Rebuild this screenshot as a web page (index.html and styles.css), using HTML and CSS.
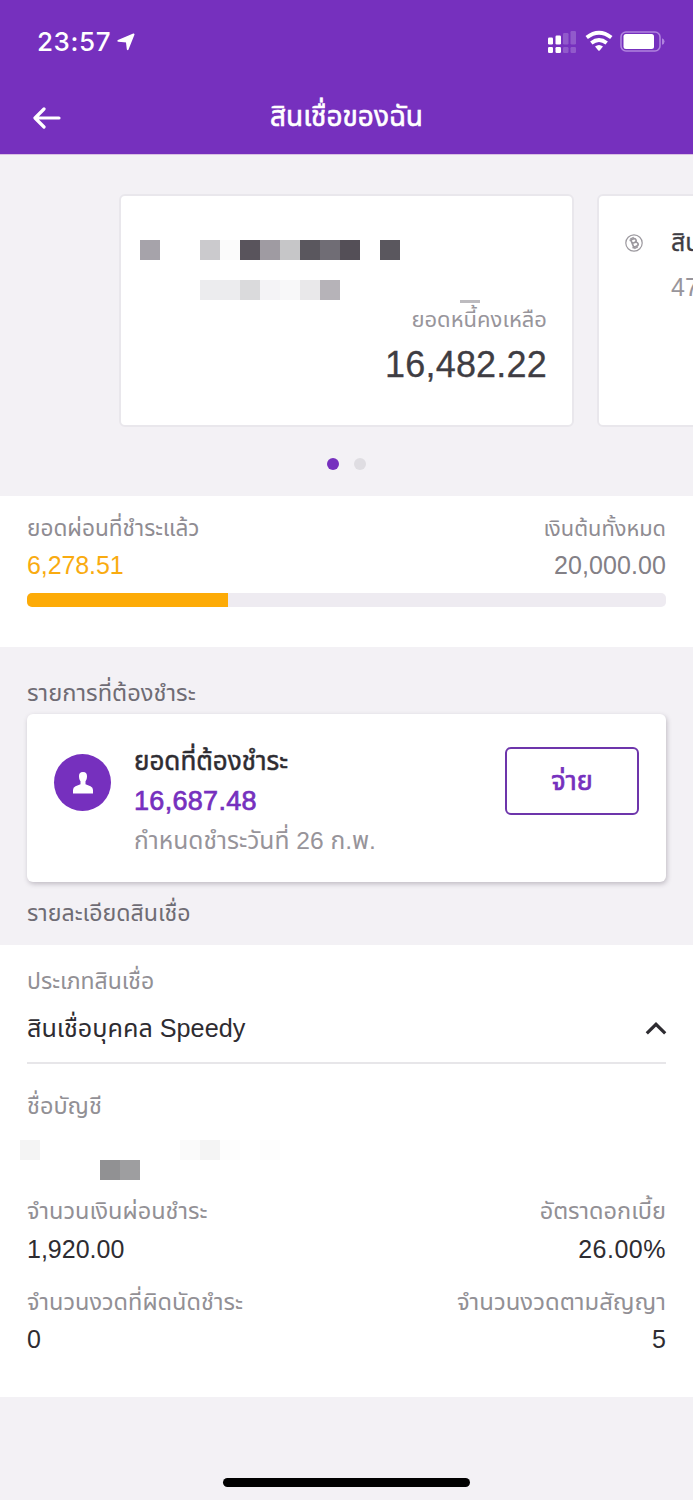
FILE: index.html
```
<!DOCTYPE html>
<html lang="th">
<head>
<meta charset="utf-8">
<title>สินเชื่อของฉัน</title>
<link rel="stylesheet" href="styles.css">
</head>
<body>
<div class="screen">
  <header class="header">
    <div class="status">
      <span class="time">23:57</span>
      <svg class="loc" viewBox="0 0 18 18" width="18" height="18"><path d="M16.600 1.400 10.700 16.200 9.800 8.600 1.300 7.900Z" fill="#fff" stroke="#fff" stroke-width="1.800" stroke-linejoin="round"/></svg>
      <span class="spacer"></span>
      <svg class="signals" viewBox="0 0 120 24" width="120" height="24">
        <g fill="#fff">
          <rect x="1" y="7.500" width="5" height="7" rx="1.200"/><rect x="8.500" y="5.500" width="5.500" height="9" rx="1.200"/>
          <rect x="1" y="17" width="5" height="6" rx="1.200"/><rect x="8.500" y="17" width="5.500" height="6" rx="1.200"/>
          <g opacity=".2"><rect x="16" y="3" width="5.500" height="11.500" rx="1.200"/><rect x="23.500" y="1" width="5.500" height="13.500" rx="1.200"/><rect x="16" y="17" width="5.500" height="6" rx="1.200"/><rect x="23.500" y="17" width="5.500" height="6" rx="1.200"/></g>
        </g>
        <g fill="none" stroke="#fff" stroke-width="3.800"><path d="M39.700 7.600Q52-2 64.300 7.600"/><path d="M44.300 13Q52 7 59.700 13"/></g>
        <path d="M48 16.600Q52 13.600 56 16.600L52.700 20.400Q52 21 51.300 20.400Z" fill="#fff"/>
        <rect x="74" y="2" width="39" height="19" rx="5" fill="none" stroke="#b083de" stroke-width="1.600"/>
        <rect x="76.500" y="4" width="30.500" height="15" rx="2.500" fill="#fff"/>
        <path d="M115 8.300Q117.500 9 117.500 11.500 117.500 14 115 14.700Z" fill="#b083de"/>
      </svg>
    </div>
    <div class="nav">
      <svg class="back" viewBox="0 0 28 22" width="28" height="22"><path d="M11 2 2 11 11 20M2.500 11H26" fill="none" stroke="#fff" stroke-width="3.200" stroke-linecap="round" stroke-linejoin="round"/></svg>
      <h1 class="title">สินเชื่อของฉัน</h1>
    </div>
  </header>

  <section class="carousel">
    <div class="cards">
      <article class="card card-main">
        <div class="mosaic mosaic-card">
          <i class="m1"></i><i></i><i></i><i class="m2"></i><i class="m3"></i><i class="m4"></i><i class="m5"></i><i class="m6"></i><i class="m7"></i><i class="m8"></i><i class="m9"></i><i></i><i class="m7"></i>
        </div>
        <div class="mosaic mosaic-card">
          <i></i><i></i><i></i><i class="n1"></i><i class="n1"></i><i class="n2"></i><i class="n3"></i><i class="n4"></i><i class="n5"></i><i class="n6"></i>
        </div>
        <div class="remnant"></div>
        <div class="balance-label">ยอดหนี้คงเหลือ</div>
        <div class="balance">16,482.22</div>
      </article>
      <article class="card card-next">
        <svg class="coin" viewBox="0 0 18 18" width="18" height="18"><g fill="none" stroke="#9c999f" stroke-width="1.200"><circle cx="9" cy="9" r="8.200"/><path transform="rotate(-22 9 9)" stroke-width="1.700" d="M5.800 5H9.800Q12 5 12 7 12 8.800 9.800 8.800H7M9.800 8.800Q12.500 9 12.500 11 12.500 13 10 13H5.800M7.200 5V13M8 3V5M10 3V5M8 13V15M10 13V15"/></g></svg>
        <div class="next-text"><div class="next-name">สินเชื่อ</div><div class="next-no">47</div></div>
      </article>
    </div>
    <div class="dots"><i class="dot dot-on"></i><i class="dot"></i></div>
  </section>

  <section class="progress">
    <div class="pair sublabel"><span class="paid-label">ยอดผ่อนที่ชำระแล้ว</span><span class="total-label">เงินต้นทั้งหมด</span></div>
    <div class="pair amount"><span class="paid">6,278.51</span><span class="total">20,000.00</span></div>
    <div class="bar"><div class="fill"></div></div>
  </section>

  <section class="due">
    <h2 class="heading heading-due">รายการที่ต้องชำระ</h2>
    <div class="due-card">
      <div class="avatar"><svg viewBox="0 0 20 22" width="20" height="22"><path d="M10 0C13 0 14.200 1.800 14 4.500 13.900 7.200 13.200 8.200 12.500 9.200V12.200L17.500 14.300Q20 15.500 20 18V21.500H0V18Q0 15.500 2.500 14.300L7.500 12.200V9.200C6.800 8.200 6.100 7.200 6 4.500 5.800 1.800 7 0 10 0Z" fill="#fff"/></svg></div>
      <div class="due-text">
        <div class="due-title">ยอดที่ต้องชำระ</div>
        <div class="due-amount">16,687.48</div>
        <div class="due-date">กำหนดชำระวันที่ 26 ก.พ.</div>
      </div>
      <button class="pay">จ่าย</button>
    </div>
    <h2 class="heading heading-detail">รายละเอียดสินเชื่อ</h2>
  </section>

  <section class="details">
    <div class="label type-label">ประเภทสินเชื่อ</div>
    <div class="select">
      <span class="select-value">สินเชื่อบุคคล Speedy</span>
      <svg viewBox="0 0 22 14" width="22" height="14"><path d="M1.800 12.300 11 3.300 20.200 12.300" fill="none" stroke="#2e2c31" stroke-width="3.200"/></svg>
    </div>
    <div class="label name-label">ชื่อบัญชี</div>
    <div class="mosaic mosaic-name"><i class="p1"></i><i></i><i></i><i></i><i></i><i></i><i></i><i></i><i class="p2"></i><i class="p1"></i><i class="p3"></i><i></i><i class="p3"></i></div>
    <div class="mosaic mosaic-name"><i></i><i></i><i></i><i></i><i class="p4"></i><i class="p5"></i></div>
    <div class="pair label row-a"><span>จำนวนเงินผ่อนชำระ</span><span>อัตราดอกเบี้ย</span></div>
    <div class="pair value row-b"><span>1,920.00</span><span class="rate">26.00%</span></div>
    <div class="pair label row-c"><span>จำนวนงวดที่ผิดนัดชำระ</span><span class="term-label">จำนวนงวดตามสัญญา</span></div>
    <div class="pair value row-d"><span>0</span><span>5</span></div>
  </section>
  <footer class="home"><div class="home-bar"></div></footer>
</div>
</body>
</html>
```
FILE: styles.css
```
* { box-sizing: border-box; }
body { margin: 0; background: #fff; font-family: "Liberation Sans", "Noto Sans Thai", sans-serif; color: #2e2c31; }
h1, h2 { margin: 0; font-weight: 400; }
svg { display: block; flex: none; }
.screen { width: 693px; height: 1500px; display: flex; flex-direction: column; background: #f3f1f5; overflow: hidden; white-space: nowrap; }

.header { height: 155px; background: #7630be; border-bottom: 1px solid #d9bfe3; flex: none; }
.status { display: flex; align-items: flex-start; height: 80px; padding: 26px 26px 0 37px; }
.time { font: 500 26px/32px Inter, sans-serif; color: #fff; letter-spacing: .6px; width: 80px; }
.loc { margin-top: 7px; }
.spacer { flex: 1; }
.signals { margin: 4px 0 0; }
.nav { display: grid; grid-template-columns: 60px 1fr 60px; align-items: start; padding-top: 18px; }
.back { margin: 9px 0 0 33px; }
.title { text-align: center; font-size: 28px; line-height: 38px; color: #fff; -webkit-text-stroke: .6px #fff; }

.carousel { height: 341px; padding-top: 39px; flex: none; overflow: hidden; }
.cards { display: flex; gap: 23px; padding-left: 119px; }
.card { flex: none; width: 455px; height: 233px; background: #fff; border: 2px solid #e9e7ec; border-radius: 6px; }
.card-main { padding: 44px 25px 0 19px; }
.mosaic { display: flex; height: 20px; }
.mosaic i { width: 20px; height: 20px; flex: none; }
.mosaic-card + .mosaic-card { margin-top: 20px; }
.m1 { background: #a6a3aa; } .m2 { background: #cbcacd; } .m3 { background: #fbfbfb; }
.m4 { background: #59545c; } .m5 { background: #9f9ba2; } .m6 { background: #c6c6c8; }
.m7 { background: #5a575e; } .m8 { background: #706d75; } .m9 { background: #544f57; }
.n1 { background: #ececee; } .n2 { background: #dadadc; } .n3 { background: #f4f3f6; }
.n4 { background: #f8f8f9; } .n5 { background: #e9e8ea; } .n6 { background: #b6b3b8; }
.remnant { width: 20px; height: 3px; margin-left: 320px; background: #bdbbbf; }
.balance-label { margin-top: 2px; text-align: right; font-size: 22px; line-height: 30px; color: #98959b; }
.balance { margin-top: 8px; text-align: right; font-size: 36px; line-height: 44px; color: #3f3d43; letter-spacing: .2px; -webkit-text-stroke: .3px #3f3d43; }
.card-next { display: flex; padding: 26px 0 0 26px; }
.coin { margin-top: 12px; }
.next-text { padding-left: 28px; }
.next-name { font-size: 25px; line-height: 40px; color: #3f3d43; -webkit-text-stroke: .3px #3f3d43; }
.next-no { margin-top: 7px; font-size: 25px; line-height: 36px; color: #98959b; }
.dots { display: flex; justify-content: center; gap: 15px; padding-top: 31px; }
.dot { width: 12px; height: 12px; border-radius: 50%; background: #dfdde2; }
.dot-on { background: #7630be; }

.pair { display: flex; justify-content: space-between; }
.progress { height: 151px; background: #fff; padding: 18px 27px 0; flex: none; }
.sublabel { font-size: 22.6px; line-height: 30px; color: #8f8c92; }
.total-label { font-size: 21.8px; }
.amount { margin-top: 6px; font-size: 25px; line-height: 30px; letter-spacing: .1px; color: #838086; }
.paid { color: #f9ab10; letter-spacing: -.1px; }
.bar { height: 14px; margin-top: 13px; background: #eeebf1; border-radius: 5px; overflow: hidden; }
.fill { width: 31.4%; height: 100%; background: #fdab07; }

.due { height: 298px; padding: 30px 27px 0; flex: none; }
.heading { font-size: 23.7px; line-height: 32px; color: #6f6c74; }
.due-card { display: flex; align-items: flex-start; height: 168px; margin-top: 5px; padding: 33px 27px 0; background: #fff; border-radius: 6px; box-shadow: 1px 2px 5px rgba(60, 50, 70, .28); }
.avatar { width: 57px; height: 57px; margin-top: 7px; border-radius: 50%; background: #7630be; display: flex; align-items: center; justify-content: center; }
.due-text { flex: 1; padding-left: 23px; margin-top: -2px; }
.due-title { font-size: 26px; line-height: 32px; -webkit-text-stroke: .5px #2e2c31; }
.due-amount { margin-top: 8px; font-size: 27px; line-height: 32px; color: #7630be; -webkit-text-stroke: .7px #7630be; letter-spacing: .3px; }
.due-date { margin-top: 8px; font-size: 24.6px; line-height: 32px; color: #97949a; }
.pay { width: 134px; height: 68px; padding: 0; border: 2px solid #6d35ab; border-radius: 6px; background: #fff; font: 400 27px/60px "Liberation Sans", "Noto Sans Thai", sans-serif; color: #7630be; -webkit-text-stroke: .7px #7630be; }
.heading-detail { margin-top: 15px; font-size: 23.2px; }

.details { height: 452px; background: #fff; padding: 20px 27px 0; flex: none; }
.label { font-size: 23.5px; line-height: 32px; color: #929095; }
.type-label { font-size: 23px; }
.value { font-size: 25px; line-height: 32px; }
.select { display: flex; justify-content: space-between; align-items: center; height: 67px; padding-bottom: 3px; border-bottom: 2px solid #e7e6e9; }
.select svg { margin-right: -1px; }
.select-value { font-size: 25.2px; line-height: 32px; }
.name-label { margin-top: 26px; }
.mosaic-name { margin-left: -7px; }
.name-label + .mosaic-name { margin-top: 18px; }
.p1 { background: #f4f4f4; } .p2 { background: #fafafa; } .p3 { background: #fdfdfd; }
.p4 { background: #919193; } .p5 { background: #9e9ea0; }
.row-a { margin-top: 15px; }
.row-b { margin-top: 6px; }
.rate { letter-spacing: .5px; }
.row-c { margin-top: 21px; }
.term-label { font-size: 23.9px; }
.row-d { margin-top: 5px; }

.home { flex: 1; display: flex; justify-content: center; padding-top: 81px; }
.home-bar { width: 247px; height: 9px; border-radius: 5px; background: #000; }
```
